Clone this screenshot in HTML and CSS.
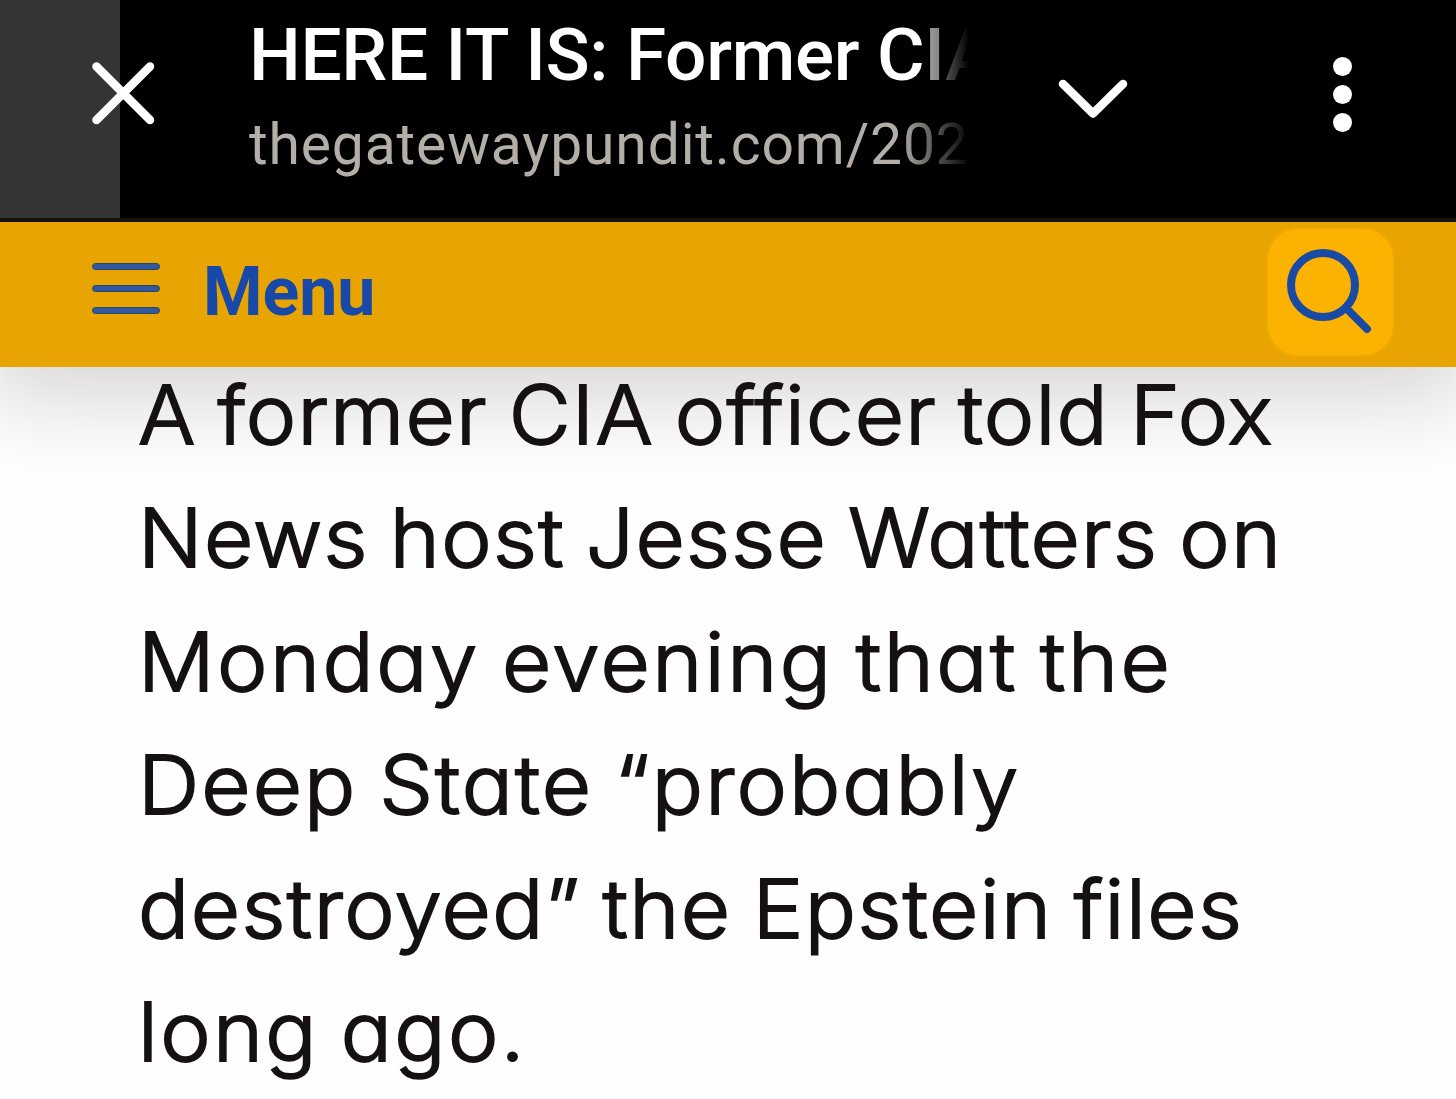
FILE: index.html
```
<!DOCTYPE html>
<html lang="en">
<head>
    <meta charset="UTF-8">
    <meta name="viewport" content="width=device-width, initial-scale=1.0">
    <title>HERE IT IS: Former CIA</title>
    <link rel="stylesheet" href="styles.css">
</head>
<body>

<div class="browser-bar">
    <button class="close" aria-label="Close">
        <svg width="64" height="64" viewBox="0 0 64 64"><path d="M5.500 5.500 59 59M59 5.500 5.500 59"/></svg>
    </button>
    <div class="page-info">
        <div class="page-title">HERE IT IS: Former CIA</div>
        <div class="page-url">thegatewaypundit.com/202</div>
    </div>
    <button class="expand" aria-label="Expand">
        <svg width="70" height="42" viewBox="0 0 70 42"><path d="M5 6 35 35.500 65 6"/></svg>
    </button>
    <button class="more" aria-label="More options">
        <span></span><span></span><span></span>
    </button>
</div>

<header class="site-header">
    <button class="menu">
        <span class="bars"><i></i><i></i><i></i></span>
        <span class="menu-text">Menu</span>
    </button>
    <button class="search" aria-label="Search">
        <svg width="90" height="88" viewBox="0 0 90 88"><circle cx="38" cy="38" r="32"/><path d="M61 61 82 82"/></svg>
    </button>
</header>

<main class="article">
    <p>
        <span class="line line-1">A former CIA officer told Fox</span>
        <span class="line line-2">News host Jesse Watters on</span>
        <span class="line line-3">Monday evening that the</span>
        <span class="line line-4">Deep State “probably</span>
        <span class="line line-5">destroyed” the Epstein files</span>
        <span class="line line-6">long ago.</span>
    </p>
</main>

</body>
</html>
```
FILE: styles.css
```
* {
    box-sizing: border-box;
}
body {
    margin: 0;
    height: 1099px;
    overflow: hidden;
    background-color: #fefefe;
    font-family: Roboto, "Liberation Sans", sans-serif;
}
button {
    padding: 0;
    border: 0;
    background: none;
    font-family: inherit;
}
svg {
    display: block;
    fill: none;
    stroke-linecap: round;
    stroke-linejoin: round;
}

/* Browser bar */
.browser-bar {
    position: relative;
    z-index: 1;
    display: flex;
    height: 222px;
    background: linear-gradient(to right, #343434 120px, #000 120px);
    border-bottom: 4px solid #15130c;
}
.browser-bar svg {
    stroke: #fff;
    stroke-width: 8.5;
}
.close {
    width: 64px;
    height: 64px;
    margin: 61px 0 0 91px;
}
.page-info {
    width: 720px;
    margin: 12px 0 0 94px;
    white-space: nowrap;
}
.page-title {
    height: 86px;
    line-height: 86px;
    color: #fff;
    font-size: 73px;
    font-weight: 500;
    letter-spacing: -0.35px;
    -webkit-mask-image: linear-gradient(to right, #000 677px, rgba(0, 0, 0, 0.6) 680px, rgba(0, 0, 0, 0.5) 694px, rgba(0, 0, 0, 0.3) 698px, transparent 720px);
    mask-image: linear-gradient(to right, #000 677px, rgba(0, 0, 0, 0.6) 680px, rgba(0, 0, 0, 0.5) 694px, rgba(0, 0, 0, 0.3) 698px, transparent 720px);
}
.page-url {
    height: 94px;
    line-height: 94px;
    color: #b3aea8;
    font-size: 57px;
    letter-spacing: 0.86px;
    -webkit-mask-image: linear-gradient(to right, #000 650px, transparent 722px);
    mask-image: linear-gradient(to right, #000 650px, transparent 722px);
}
.expand {
    width: 70px;
    height: 42px;
    margin: 78px 0 0 89px;
}
.more {
    display: flex;
    flex-direction: column;
    gap: 9px;
    margin: 57px 0 0 205px;
}
.more span {
    width: 19px;
    height: 19px;
    border-radius: 50%;
    background-color: #fff;
}

/* Site header */
.site-header {
    display: flex;
    justify-content: space-between;
    height: 145px;
    padding: 0 63px 0 92px;
    background-color: #e8a400;
    box-shadow: 0 14px 90px 15px rgba(30, 15, 20, 0.18);
}
.menu {
    display: flex;
    height: 145px;
}
.bars {
    display: flex;
    flex-direction: column;
    gap: 15px;
    width: 68px;
    margin-top: 41px;
}
.bars i {
    height: 7px;
    border-radius: 4px;
    background-color: #3159a0;
    border: 1px solid #2a4566;
}
.menu-text {
    margin: 25px 0 0 43px;
    line-height: 90px;
    color: #1849a9;
    font-size: 68px;
    font-weight: 700;
}
.search {
    display: flex;
    width: 125px;
    height: 126px;
    margin-top: 7px;
    padding: 18px 0 0 17px;
    border-radius: 30px;
    background-color: #fcb200;
    box-shadow: 0 0 4px #fcb200;
}
.search svg {
    stroke: #194ba5;
    stroke-width: 8;
}

/* Article */
.article {
    position: relative;
    padding: 0 0 0 138px;
}
.article p {
    margin: -13px 0 0;
    color: #151112;
    font-family: Inter, "Open Sans", sans-serif;
    font-size: 81px;
    font-weight: 350;
    font-feature-settings: "cv11";
    line-height: 123.4px;
    word-spacing: -4px;
    transform: scaleX(1.05);
    transform-origin: left top;
    -webkit-text-stroke: 1.8px #151112;
}
.line {
    display: block;
    white-space: nowrap;
}
.line-1 {
    letter-spacing: 1.15px;
}
.line-2 {
    letter-spacing: 1.25px;
}
.line-3 {
    letter-spacing: 2.4px;
}
.line-4 {
    letter-spacing: 2px;
}
.line-5 {
    letter-spacing: 1.4px;
}
.line-6 {
    letter-spacing: 2.2px;
}
```
